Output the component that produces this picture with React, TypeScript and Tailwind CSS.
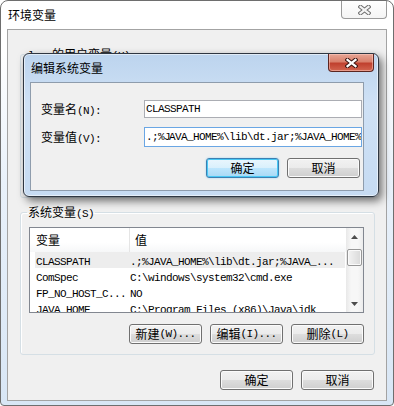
import React from 'react';

const CJK = /[\u3000-\u9fff\uff00-\uffef]/;

// splits a label into CJK runs and ASCII runs, the ASCII half-width like SimSun
function Txt({ s }: { s: string }) {
  const parts = s.match(/[\u3000-\u9fff\uff00-\uffef]+|[^\u3000-\u9fff\uff00-\uffef]+/g) ?? [];
  return (
    <>
      {parts.map((p, i) =>
        CJK.test(p) ? (
          <span key={i} className="font-['Noto_Sans_CJK_SC',sans-serif] text-[12px]">{p}</span>
        ) : (
          <span key={i} className="font-['Liberation_Mono',monospace] text-[11px] tracking-[-0.6px]">{p}</span>
        )
      )}
    </>
  );
}

function CloseGlyph({ active }: { active: boolean }) {
  return (
    <svg width="13" height="10" viewBox="0 0 13 10">
      <g strokeLinecap="square">
        <path d="M2.5 1.8 L10.5 8.2 M10.5 1.8 L2.5 8.2" stroke={active ? '#3b1410' : '#6f6f6f'} strokeWidth="4.2" />
        <path d="M2.5 1.8 L10.5 8.2 M10.5 1.8 L2.5 8.2" stroke={active ? '#ffffff' : '#f4f4f4'} strokeWidth="2.2" />
      </g>
    </svg>
  );
}

function Button({ label, focused }: { label: string; focused?: boolean }) {
  if (focused) {
    return (
      <div className="flex items-center justify-center w-[73px] h-[20px] rounded-[3px] border border-[#3c7fb1] shadow-[inset_0_0_0_1px_#48c8f5,0_0_2px_#8fd0f3] bg-[linear-gradient(to_bottom,#eaf6fd_0%,#d9f0fc_50%,#bee6fd_50%,#a7d9f5_100%)] leading-[14px] text-black">
        <Txt s={label} />
      </div>
    );
  }
  return (
    <div className="flex items-center justify-center w-[73px] h-[20px] rounded-[3px] border border-[#707070] shadow-[inset_0_0_0_1px_#fbfbfb] bg-[linear-gradient(to_bottom,#f2f2f2_0%,#ebebeb_50%,#dddddd_50%,#cfcfcf_100%)] leading-[14px] text-black">
      <Txt s={label} />
    </div>
  );
}

const rows = [
  { name: 'CLASSPATH', value: '.;%JAVA_HOME%\\lib\\dt.jar;%JAVA_...', selected: true },
  { name: 'ComSpec', value: 'C:\\windows\\system32\\cmd.exe' },
  { name: 'FP_NO_HOST_C...', value: 'NO' },
  { name: 'JAVA_HOME', value: 'C:\\Program Files (x86)\\Java\\jdk' },
];

function ScrollBar() {
  return (
    <div className="w-[17px] flex flex-col bg-[linear-gradient(to_right,#e8e8e8,#f7f7f7_30%,#f7f7f7_70%,#ececec)]">
      <div className="h-[17px] flex items-center justify-center">
        <svg width="7" height="4" viewBox="0 0 7 4">
          <path d="M3.5 0 L7 4 L0 4 Z" fill="#4d4d4d" />
        </svg>
      </div>
      <div className="mt-[4px] mx-[1px] h-[17px] rounded-[2px] border border-[#979797] shadow-[inset_0_0_0_1px_#fafafa] bg-[linear-gradient(to_right,#f3f3f3,#e6e6e6_50%,#d9d9d9)]" />
      <div className="flex-1" />
      <div className="h-[17px] flex items-center justify-center">
        <svg width="7" height="4" viewBox="0 0 7 4">
          <path d="M0 0 L7 0 L3.5 4 Z" fill="#4d4d4d" />
        </svg>
      </div>
    </div>
  );
}

function VarList() {
  return (
    <div className="ml-[8px] mr-[10px] h-[86px] border border-[#828790] bg-white flex overflow-hidden">
      <div className="flex-1 flex flex-col overflow-hidden">
        <div className="h-[24px] flex shrink-0 bg-[linear-gradient(to_bottom,#ffffff,#ffffff_60%,#f6f7f8)]">
          <div className="w-[100px] pl-[6px] flex items-center border-r border-[#e5e5e5] leading-[14px]">
            <Txt s="变量" />
          </div>
          <div className="pl-[5px] flex items-center leading-[14px]">
            <Txt s="值" />
          </div>
        </div>
        {rows.map((r) => (
          <div
            key={r.name}
            className={
              r.selected
                ? 'ml-[5px] mr-[1px] h-[16px] shrink-0 flex items-center bg-[#ededed] leading-[14px] whitespace-nowrap'
                : 'ml-[5px] mr-[1px] h-[16px] shrink-0 flex items-center leading-[14px] whitespace-nowrap'
            }
          >
            <div className="w-[95px] pl-[1px]">
              <Txt s={r.name} />
            </div>
            <div>
              <Txt s={r.value} />
            </div>
          </div>
        ))}
      </div>
      <ScrollBar />
    </div>
  );
}

function EditDialog() {
  return (
    <div className="absolute left-[23px] top-[53px] w-[356px] h-[144px] rounded-[6px] border border-[#2f3742] shadow-[3px_4px_9px_rgba(0,0,0,0.55),inset_0_0_0_1px_rgba(255,255,255,0.55)] bg-[linear-gradient(to_bottom,#bcd4ee,#cfe1f5_35%,#c6dbf2)] flex flex-col">
      <div className="h-[28px] flex justify-between items-start shrink-0">
        <div className="pl-[7px] h-full flex items-center leading-[14px] text-black">
          <Txt s="编辑系统变量" />
        </div>
        <div className="mr-[4px] w-[46px] h-[18px] rounded-b-[4px] border border-t-0 border-[#5b2520] bg-[linear-gradient(to_bottom,#e7a595,#d9806c_45%,#c0402e_55%,#d26550)] flex items-center justify-center shadow-[inset_0_0_0_1px_rgba(255,210,200,0.5)]">
          <CloseGlyph active />
        </div>
      </div>
      <div className="ml-[6px] w-[334px] h-[109px] border border-[#8e9cac] bg-[#f0f0f0] pl-[10px] pr-[1px] pt-[17px]">
        <div className="grid grid-cols-[103px_218px] gap-y-[9px] items-center">
          <div className="leading-[14px]">
            <Txt s="变量名(N):" />
          </div>
          <div className="h-[18px] border border-[#abadb3] border-t-[#abadb3] bg-white pl-[1px] flex items-center leading-[14px] overflow-hidden whitespace-nowrap">
            <Txt s="CLASSPATH" />
          </div>
          <div className="leading-[14px]">
            <Txt s="变量值(V):" />
          </div>
          <div className="h-[20px] border border-[#6aa6e4] bg-white pl-[1px] flex items-center leading-[14px] overflow-hidden whitespace-nowrap">
            <Txt s=".;%J" />
            <span className="inline-block w-px h-[13px] bg-black -mr-px" />
            <Txt s="AVA_HOME%\lib\dt.jar;%JAVA_HOME%\lib\tools.jar" />
          </div>
        </div>
        <div className="mt-[11px] mr-[2px] flex justify-end gap-[8px]">
          <Button label="确定" focused />
          <Button label="取消" />
        </div>
      </div>
    </div>
  );
}

export default function App() {
  return (
    <div className="w-[394px] h-[406px] relative overflow-hidden bg-white text-black">
      <div className="h-full flex flex-col rounded-t-[8px] rounded-b-[4px] border border-[#6e6e6e] bg-[linear-gradient(to_bottom,#ffffff,#ffffff_12%,#e9f1fa_45%,#d8e6f5)]">
        <div className="h-[28px] shrink-0 flex justify-between items-start">
          <div className="pl-[7px] h-full flex items-center leading-[14px]">
            <Txt s="环境变量" />
          </div>
          <div className="mr-[6px] w-[46px] h-[18px] rounded-b-[4px] border border-t-0 border-[#9a9a9a] bg-[linear-gradient(to_bottom,#ffffff,#f4f4f4)] flex items-center justify-center">
            <CloseGlyph active={false} />
          </div>
        </div>
        <div className="flex-1 mx-[6px] mb-[4px] border border-[#a3a3a3] bg-[#f0f0f0] flex flex-col">
          <fieldset className="mt-[17px] ml-[12px] mr-[11px] h-[151px] border border-[#d5dfe5] rounded-[3px]">
            <legend className="ml-[6px] px-[1px] leading-[12px]">
              <Txt s="lee 的用户变量(U)" />
            </legend>
          </fieldset>
          <fieldset className="mt-[7px] ml-[12px] mr-[11px] pb-[10px] border border-[#d5dfe5] rounded-[3px] shadow-[inset_1px_1px_0_#ffffff]">
            <legend className="ml-[6px] px-[1px] leading-[12px]">
              <Txt s="系统变量(S)" />
            </legend>
            <div className="mt-[7px]">
              <VarList />
            </div>
            <div className="mt-[11px] mr-[10px] flex justify-end gap-[8px]">
              <Button label="新建(W)..." />
              <Button label="编辑(I)..." />
              <Button label="删除(L)" />
            </div>
          </fieldset>
          <div className="mt-[15px] mr-[12px] flex justify-end gap-[8px]">
            <Button label="确定" />
            <Button label="取消" />
          </div>
        </div>
      </div>
      <EditDialog />
    </div>
  );
}
